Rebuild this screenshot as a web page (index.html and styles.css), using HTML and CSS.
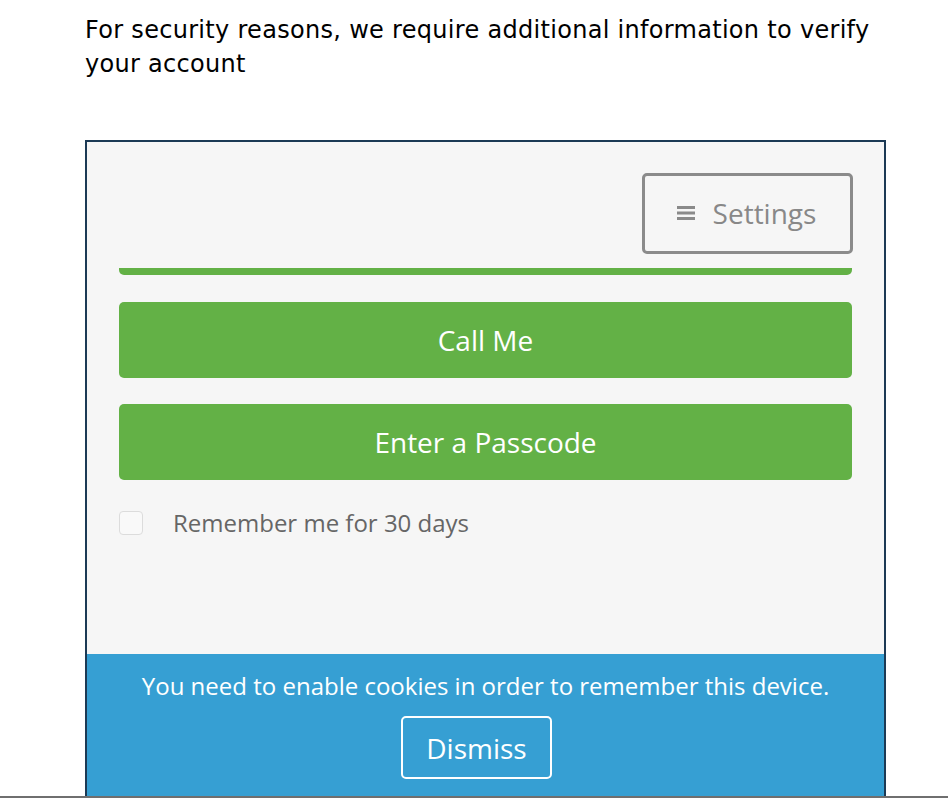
FILE: index.html
```html
<!DOCTYPE html>
<html lang="en">
<head>
<meta charset="utf-8">
<title>Verify your account</title>
<link rel="stylesheet" href="styles.css">
</head>
<body>
<div class="page">
  <h1 class="intro">For security reasons, we require additional information to verify your account</h1>
  <div class="card">
    <div class="card-body">
      <div class="toolbar">
        <button class="settings" type="button">
          <svg class="burger" width="18" height="14" viewBox="0 0 18 14" aria-hidden="true">
            <rect x="0" y="0" width="18" height="3" fill="#8a8a8a"/>
            <rect x="0" y="5.5" width="18" height="3" fill="#8a8a8a"/>
            <rect x="0" y="11" width="18" height="3" fill="#8a8a8a"/>
          </svg>
          <span>Settings</span>
        </button>
      </div>
      <div class="bar"></div>
      <button class="action" type="button">Call Me</button>
      <button class="action" type="button">Enter a Passcode</button>
      <label class="remember">
        <span class="box"></span>
        <span>Remember me for 30 days</span>
      </label>
    </div>
    <div class="banner">
      <p class="banner-text">You need to enable cookies in order to remember this device.</p>
      <button class="dismiss" type="button">Dismiss</button>
    </div>
  </div>
</div>
<div class="edge"></div>
</body>
</html>
```
FILE: styles.css
```css
html, body {
  margin: 0;
  padding: 0;
  background: #ffffff;
  overflow: hidden;
  height: 798px;
}
.page {
  padding-left: 85px;
  width: 801px;
}
.intro {
  margin: 13px 0 0 0;
  font-family: "DejaVu Sans", sans-serif;
  font-weight: normal;
  font-size: 24px;
  letter-spacing: 0.3px;
  line-height: 34px;
  color: #000;
  width: 801px;
}
.card {
  margin-top: 59px;
  border: 2px solid #1c3a55;
  border-bottom: none;
  background: #f6f6f6;
  font-family: "Open Sans", sans-serif;
}
.card-body {
  padding: 31px 32px 0 32px;
  display: flex;
  flex-direction: column;
  height: 512px;
  box-sizing: border-box;
}
.toolbar {
  display: flex;
  justify-content: flex-end;
}
.settings {
  width: 211px;
  height: 81px;
  border: 3px solid #8b8b8b;
  border-radius: 5px;
  background: #f6f6f6;
  color: #888;
  font-family: "Open Sans", sans-serif;
  font-size: 28px;
  display: flex;
  align-items: center;
  justify-content: center;
  gap: 18px;
  padding: 0 2px 2px 0;
  margin-right: -1px;
}
.burger {
  display: block;
}
.bar {
  margin-top: 14px;
  height: 7px;
  background: #63b146;
  border-radius: 0 0 5px 5px;
}
.action {
  margin-top: 27px;
  height: 76px;
  border: none;
  border-radius: 5px;
  background: #63b146;
  color: #fff;
  font-family: "Open Sans", sans-serif;
  font-size: 28px;
  padding: 0;
}
.action + .action {
  margin-top: 26px;
}
.remember {
  margin-top: 26px;
  display: flex;
  align-items: center;
  gap: 30px;
  font-size: 24px;
  color: #666;
}
.box {
  width: 22px;
  height: 22px;
  border: 1px solid #dcdcdc;
  border-radius: 4px;
  background: #f9f9f9;
  flex: none;
}
.banner {
  background: #369fd3;
  height: 170px;
  display: flex;
  flex-direction: column;
  align-items: center;
  color: #fff;
}
.banner-text {
  margin: 16px 0 0 0;
  font-size: 24px;
  line-height: 32px;
}
.dismiss {
  margin-top: 14px;
  margin-left: -18px;
  width: 151px;
  height: 63px;
  border: 2px solid #fff;
  border-radius: 5px;
  background: transparent;
  color: #fff;
  font-family: "Open Sans", sans-serif;
  font-size: 28px;
  padding: 0;
}
.edge {
  position: fixed;
  left: 0;
  right: 0;
  bottom: 0;
  height: 2px;
  background: #6f6f6f;
}
```
